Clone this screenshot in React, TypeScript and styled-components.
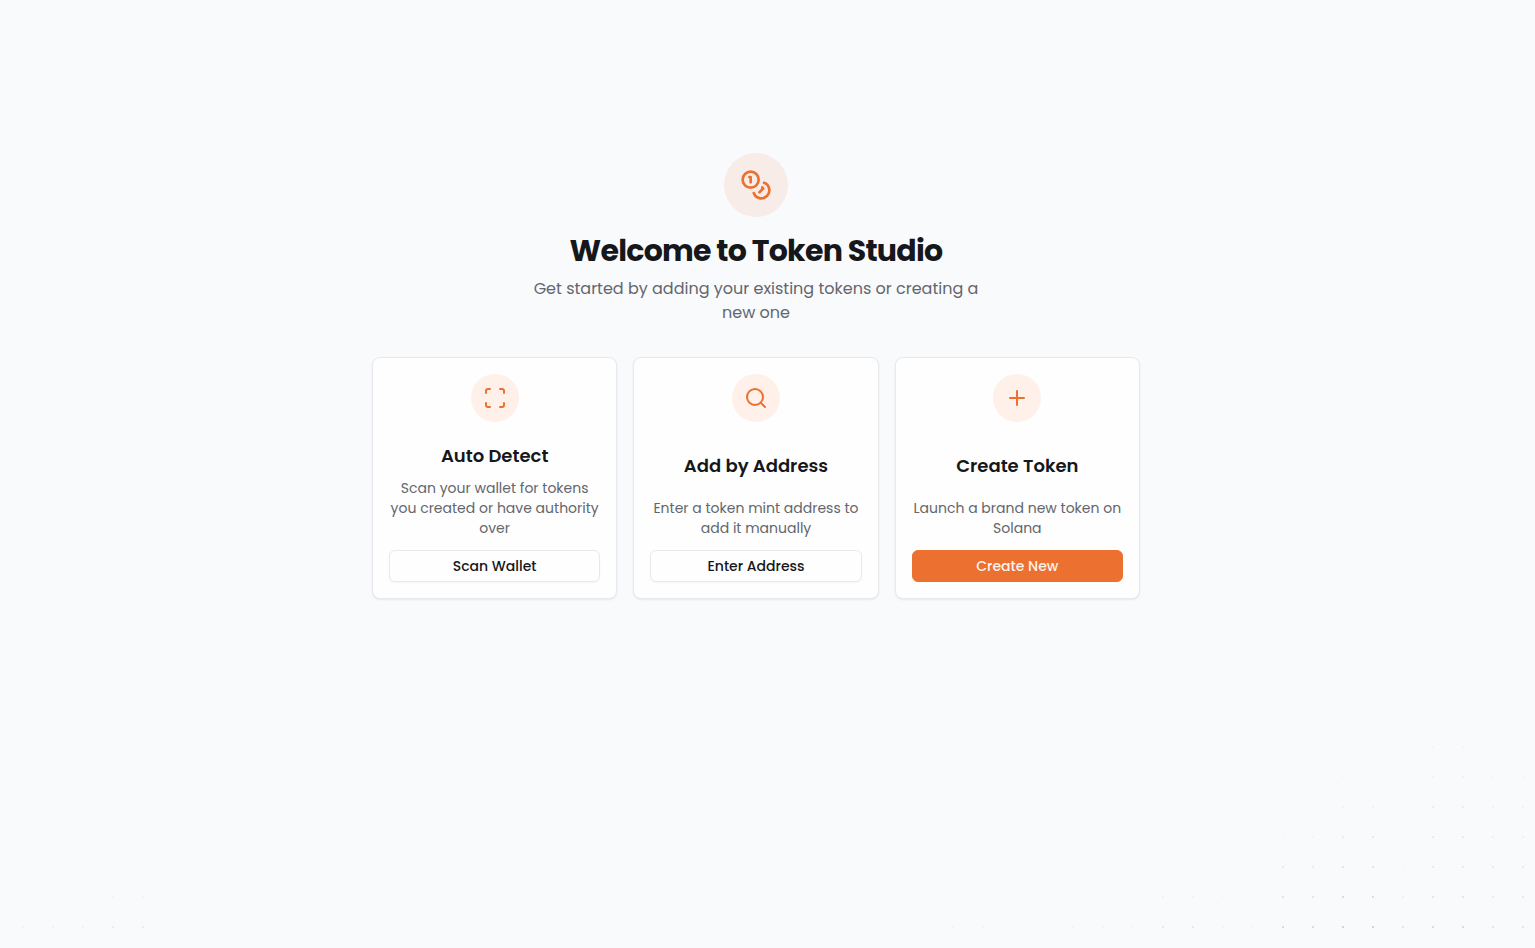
import React from 'react';
import styled, { createGlobalStyle, css } from 'styled-components';
import { Coins, Plus, Scan, Search } from 'lucide-react';
import type { LucideIcon } from 'lucide-react';

const GlobalStyle = createGlobalStyle`
  *, *::before, *::after { box-sizing: border-box; }
  body {
    margin: 0;
    background: #f9fafc;
    color: #15171a;
    font-family: Poppins, Inter, sans-serif;
    -webkit-font-smoothing: antialiased;
  }
  h1, h2, p { margin: 0; }
`;

const Page = styled.div`
  position: relative;
  min-height: 100vh;
  padding: 153px 23px 32px 0;
`;

const Backdrop = styled.svg`
  position: absolute;
  left: 0;
  bottom: 0;
  width: 100%;
  height: 210px;
  pointer-events: none;
`;

const Content = styled.main`
  position: relative;
  max-width: 768px;
  margin: 0 auto;
  display: flex;
  flex-direction: column;
  gap: 32px;
`;

const Intro = styled.header`
  display: flex;
  flex-direction: column;
  align-items: center;
  text-align: center;
`;

const IconBadge = styled.div<{ $large?: boolean }>`
  display: flex;
  align-items: center;
  justify-content: center;
  flex: none;
  width: ${(p) => (p.$large ? 64 : 48)}px;
  height: ${(p) => (p.$large ? 64 : 48)}px;
  margin-bottom: ${(p) => (p.$large ? 16 : 12)}px;
  border-radius: 50%;
  background: ${(p) => (p.$large ? '#f8ece8' : '#fff0e9')};
  color: #ec702f;
`;

const Title = styled.h1`
  font-size: 30px;
  line-height: 36px;
  font-weight: 700;
  letter-spacing: -0.025em;
`;

const Lead = styled.p`
  max-width: 448px;
  margin-top: 8px;
  font-size: 16px;
  line-height: 24px;
  color: #63666d;
`;

const Cards = styled.section`
  display: grid;
  grid-template-columns: repeat(3, 1fr);
  gap: 16px;

  @media (max-width: 700px) {
    grid-template-columns: 1fr;
  }
`;

const Card = styled.article`
  display: flex;
  flex-direction: column;
  padding: 16px;
  border: 1px solid #e7e9ed;
  border-radius: 8px;
  background: #fefefe;
  box-shadow: 0 1px 2px rgba(16, 24, 40, 0.08);
`;

const CardBody = styled.div`
  flex: 1;
  display: flex;
  flex-direction: column;
  align-items: center;
  justify-content: space-between;
  gap: 8px;
  text-align: center;
`;

const CardTitle = styled.h2`
  font-size: 18px;
  line-height: 28px;
  font-weight: 600;
`;

const CardText = styled.p`
  font-size: 14px;
  line-height: 20px;
  color: #63666d;
`;

const Action = styled.button<{ $primary?: boolean }>`
  width: 100%;
  height: 32px;
  margin-top: 12px;
  padding: 0 12px;
  border: 1px solid #e6eaea;
  border-radius: 6px;
  background: #fefefe;
  color: #15171a;
  font: 500 14px/20px Poppins, Inter, sans-serif;
  box-shadow: 0 1px 2px rgba(16, 24, 40, 0.04);
  cursor: pointer;

  ${(p) =>
    p.$primary &&
    css`
      border-color: #ec702f;
      background: #ec702f;
      color: #fdf3ee;
      box-shadow: none;
    `}
`;

/* Dot columns of the backdrop: x position, then opacities from the bottom row up. */
const dotColumns: [number, number[]][] = [
  [22, [0.03]],
  [52, [0.03, 0.01]],
  [82, [0.03, 0.01]],
  [112, [0.06, 0.02]],
  [142, [0.06, 0.02]],
  [952, [0.02]],
  [982, [0.02]],
  [1072, [0.02]],
  [1102, [0.02]],
  [1132, [0.02]],
  [1162, [0.07, 0.03, 0.01]],
  [1192, [0.07, 0.03, 0.01]],
  [1222, [0.02, 0.01]],
  [1252, [0.02, 0.01]],
  [1282, [0.12, 0.09, 0.05, 0.02]],
  [1312, [0.11, 0.08, 0.05, 0.02]],
  [1342, [0.15, 0.11, 0.08, 0.05, 0.03, 0.01]],
  [1372, [0.15, 0.11, 0.08, 0.06, 0.03, 0.01]],
  [1402, [0.08, 0.04, 0.02]],
  [1432, [0.11, 0.08, 0.06, 0.06, 0.05, 0.03, 0.02]],
  [1462, [0.11, 0.08, 0.06, 0.06, 0.05, 0.04, 0.02]],
  [1492, [0.08, 0.06, 0.05, 0.04, 0.03, 0.02]],
  [1522, [0.08, 0.07, 0.05, 0.04, 0.03, 0.02]],
];

interface Option {
  icon: LucideIcon;
  title: string;
  text: string;
  action: string;
  primary?: boolean;
}

const options: Option[] = [
  {
    icon: Scan,
    title: 'Auto Detect',
    text: 'Scan your wallet for tokens you created or have authority over',
    action: 'Scan Wallet',
  },
  {
    icon: Search,
    title: 'Add by Address',
    text: 'Enter a token mint address to add it manually',
    action: 'Enter Address',
  },
  {
    icon: Plus,
    title: 'Create Token',
    text: 'Launch a brand new token on Solana',
    action: 'Create New',
    primary: true,
  },
];

export default function App() {
  return (
    <Page>
      <GlobalStyle />
      <Backdrop aria-hidden="true">
        {dotColumns.map(([x, column]) =>
          column.map((opacity, row) => (
            <rect key={`${x}-${row}`} x={x} y={188 - row * 30} width={2} height={2} opacity={opacity} />
          )),
        )}
      </Backdrop>
      <Content>
        <Intro>
          <IconBadge $large>
            <Coins size={32} />
          </IconBadge>
          <Title>Welcome to Token Studio</Title>
          <Lead>Get started by adding your existing tokens or creating a new one</Lead>
        </Intro>
        <Cards>
          {options.map(({ icon: Icon, title, text, action, primary }) => (
            <Card key={title}>
              <CardBody>
                <IconBadge>
                  <Icon size={24} />
                </IconBadge>
                <CardTitle>{title}</CardTitle>
                <CardText>{text}</CardText>
              </CardBody>
              <Action type="button" $primary={primary}>
                {action}
              </Action>
            </Card>
          ))}
        </Cards>
      </Content>
    </Page>
  );
}
